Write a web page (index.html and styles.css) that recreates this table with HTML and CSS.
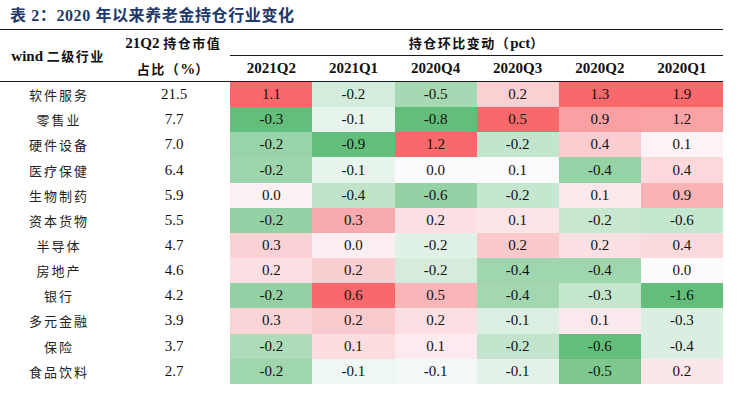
FILE: index.html
```html
<!DOCTYPE html>
<html lang="zh">
<head>
<meta charset="utf-8">
<title>表 2</title>
<link rel="stylesheet" href="styles.css">
</head>
<body>
<div class="page">
  <h1 class="title">表 2：2020 年以来养老金持仓行业变化</h1>
  <table class="tbl">
    <colgroup>
      <col class="c-name"><col class="c-share">
      <col class="c-q"><col class="c-q"><col class="c-q"><col class="c-q"><col class="c-q"><col class="c-q">
    </colgroup>
    <thead>
      <tr class="h1">
        <th rowspan="2" class="hname">wind <span class="cjk">二级行业</span></th>
        <th class="hshare">21Q2 <span class="cjk">持仓市值</span></th>
        <th colspan="6" class="hgroup"><span class="cjk">持仓环比变动（</span>pct<span class="cjk">）</span></th>
      </tr>
      <tr class="h2">
        <th class="hshare"><span class="cjk">占比（</span>%<span class="cjk">）</span></th>
        <th>2021Q2</th><th>2021Q1</th><th>2020Q4</th><th>2020Q3</th><th>2020Q2</th><th>2020Q1</th>
      </tr>
    </thead>
    <tbody>
      <tr><td class="name">软件服务</td><td class="num">21.5</td><td style="background:#f8696b">1.1</td><td style="background:#d4ecdc">-0.2</td><td style="background:#a6d8b3">-0.5</td><td style="background:#fbd0d3">0.2</td><td style="background:#f8696b">1.3</td><td style="background:#f8696b">1.9</td></tr>
      <tr><td class="name">零售业</td><td class="num">7.7</td><td style="background:#63be7b">-0.3</td><td style="background:#e6f4eb">-0.1</td><td style="background:#63be7b">-0.8</td><td style="background:#f8696b">0.5</td><td style="background:#f9a0a2">0.9</td><td style="background:#f9a3a5">1.2</td></tr>
      <tr><td class="name">硬件设备</td><td class="num">7.0</td><td style="background:#99d3aa">-0.2</td><td style="background:#63be7b">-0.9</td><td style="background:#f8696b">1.2</td><td style="background:#c3e5cd">-0.2</td><td style="background:#fbcdd0">0.4</td><td style="background:#fbf3f5">0.1</td></tr>
      <tr><td class="name">医疗保健</td><td class="num">6.4</td><td style="background:#9dd5ac">-0.2</td><td style="background:#e6f4eb">-0.1</td><td style="background:#fbfbfd">0.0</td><td style="background:#fbfbfd">0.1</td><td style="background:#95d2a6">-0.4</td><td style="background:#fbd9dc">0.4</td></tr>
      <tr><td class="name">生物制药</td><td class="num">5.9</td><td style="background:#fbf0f3">0.0</td><td style="background:#c0e3c9">-0.4</td><td style="background:#94d2a5">-0.6</td><td style="background:#c5e6cf">-0.2</td><td style="background:#fbe8eb">0.1</td><td style="background:#f9b3b5">0.9</td></tr>
      <tr><td class="name">资本货物</td><td class="num">5.5</td><td style="background:#94d1a5">-0.2</td><td style="background:#f9aaac">0.3</td><td style="background:#fbdfe2">0.2</td><td style="background:#fbe5e8">0.1</td><td style="background:#c7e7d0">-0.2</td><td style="background:#c5e6cf">-0.6</td></tr>
      <tr><td class="name">半导体</td><td class="num">4.7</td><td style="background:#fad2d5">0.3</td><td style="background:#fbeff2">0.0</td><td style="background:#e0f1e6">-0.2</td><td style="background:#f9c9cc">0.2</td><td style="background:#fbe0e3">0.2</td><td style="background:#fbdadd">0.4</td></tr>
      <tr><td class="name">房地产</td><td class="num">4.6</td><td style="background:#fbe0e3">0.2</td><td style="background:#facfd2">0.2</td><td style="background:#d5ecdd">-0.2</td><td style="background:#a0d6ae">-0.4</td><td style="background:#a0d6ae">-0.4</td><td style="background:#fcfbfe">0.0</td></tr>
      <tr><td class="name">银行</td><td class="num">4.2</td><td style="background:#93d1a4">-0.2</td><td style="background:#f8696b">0.6</td><td style="background:#f9b6b8">0.5</td><td style="background:#a2d7b0">-0.4</td><td style="background:#c4e6ce">-0.3</td><td style="background:#63be7b">-1.6</td></tr>
      <tr><td class="name">多元金融</td><td class="num">3.9</td><td style="background:#fad4d7">0.3</td><td style="background:#f9cbce">0.2</td><td style="background:#fbdfe2">0.2</td><td style="background:#dcefe3">-0.1</td><td style="background:#fbeaed">0.1</td><td style="background:#dbeee2">-0.3</td></tr>
      <tr><td class="name">保险</td><td class="num">3.7</td><td style="background:#aedcba">-0.2</td><td style="background:#fbdde0">0.1</td><td style="background:#fbebee">0.1</td><td style="background:#c3e5cd">-0.2</td><td style="background:#63be7b">-0.6</td><td style="background:#dbeee2">-0.4</td></tr>
      <tr><td class="name">食品饮料</td><td class="num">2.7</td><td style="background:#9fd6ad">-0.2</td><td style="background:#eef7f2">-0.1</td><td style="background:#f1f8f5">-0.1</td><td style="background:#e3f2e9">-0.1</td><td style="background:#7ec890">-0.5</td><td style="background:#fbe6e9">0.2</td></tr>
    </tbody>
  </table>
</div>
</body>
</html>
```

FILE: styles.css
```css
html, body {
  margin: 0;
  padding: 0;
  background: #ffffff;
}

.page {
  width: 745px;
  height: 419px;
  overflow: hidden;
  font-family: "Liberation Serif", "Noto Sans CJK SC", serif;
  color: #111111;
}

.title {
  margin: 0 0 1px 10px;
  padding-top: 4px;
  height: 24px;
  line-height: 24px;
  font-size: 16px;
  font-weight: bold;
  color: #22386a;
  font-family: "Liberation Serif", "Noto Sans CJK SC", serif;
  letter-spacing: 0.6px;
}

.tbl {
  border-collapse: collapse;
  table-layout: fixed;
  width: 723px;
  border-top: 1px solid #1a1a1a;
}

.c-name { width: 116px; }
.c-share { width: 114px; }
.c-q { width: 82px; }

.tbl th {
  padding: 0;
  font-weight: bold;
  font-size: 15px;
  text-align: center;
  vertical-align: middle;
  color: #111111;
}

.tbl th .cjk {
  font-family: "Noto Sans CJK SC", sans-serif;
  font-size: 13px;
  letter-spacing: 1.5px;
}

.tbl .h1 th { height: 25px; }
.tbl .h2 th { height: 25px; }

.tbl .hgroup {
  border-bottom: 1px solid #1a1a1a;
}

.tbl .h2 {
  border-bottom: 1px solid #1a1a1a;
}

.tbl td {
  padding: 0;
  height: 25.17px;
  font-size: 15px;
  text-align: center;
  vertical-align: middle;
  color: #111111;
}

.tbl td.name {
  font-family: "Noto Sans CJK SC", sans-serif;
  font-size: 13px;
  letter-spacing: 2px;
  padding-left: 2px;
  color: #222222;
}

.tbl td.num {
  padding-left: 2px;
}
```
